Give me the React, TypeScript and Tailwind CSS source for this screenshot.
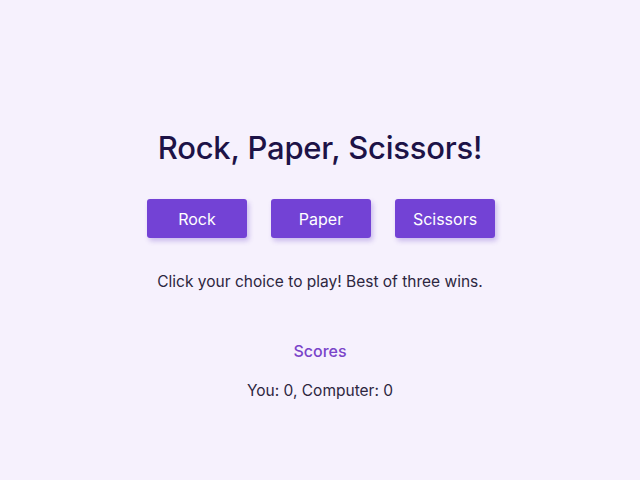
import React from "react";

export default function App() {
  return (
    <div className="w-[640px] h-[480px] bg-[#f6f1fd] flex flex-col items-center pt-[129px] text-center" style={{ fontFamily: "Inter, 'Noto Sans', sans-serif" }}>
      <h1 className="text-[31px] leading-[38px] font-medium text-[#1d1347] tracking-[-0.2px]">Rock, Paper, Scissors!</h1>
      <div className="flex gap-6 mt-[32px] pl-[2px]">
        {["Rock", "Paper", "Scissors"].map((t) => (
          <button key={t} className="w-[100px] h-[39px] rounded-[3px] bg-[#7342d5] text-white text-[16px] shadow-[2px_3px_5px_rgba(100,60,200,0.3)]">
            {t}
          </button>
        ))}
      </div>
      <p className="mt-[32px] text-[15.5px] leading-[24px] text-[#2d2640]">Click your choice to play! Best of three wins.</p>
      <h2 className="mt-[45px] text-[16px] leading-[24px] font-medium text-[#7a44c9]">Scores</h2>
      <p className="mt-[16px] text-[15.5px] leading-[24px] text-[#2d2640]">You: 0, Computer: 0</p>
    </div>
  );
}
